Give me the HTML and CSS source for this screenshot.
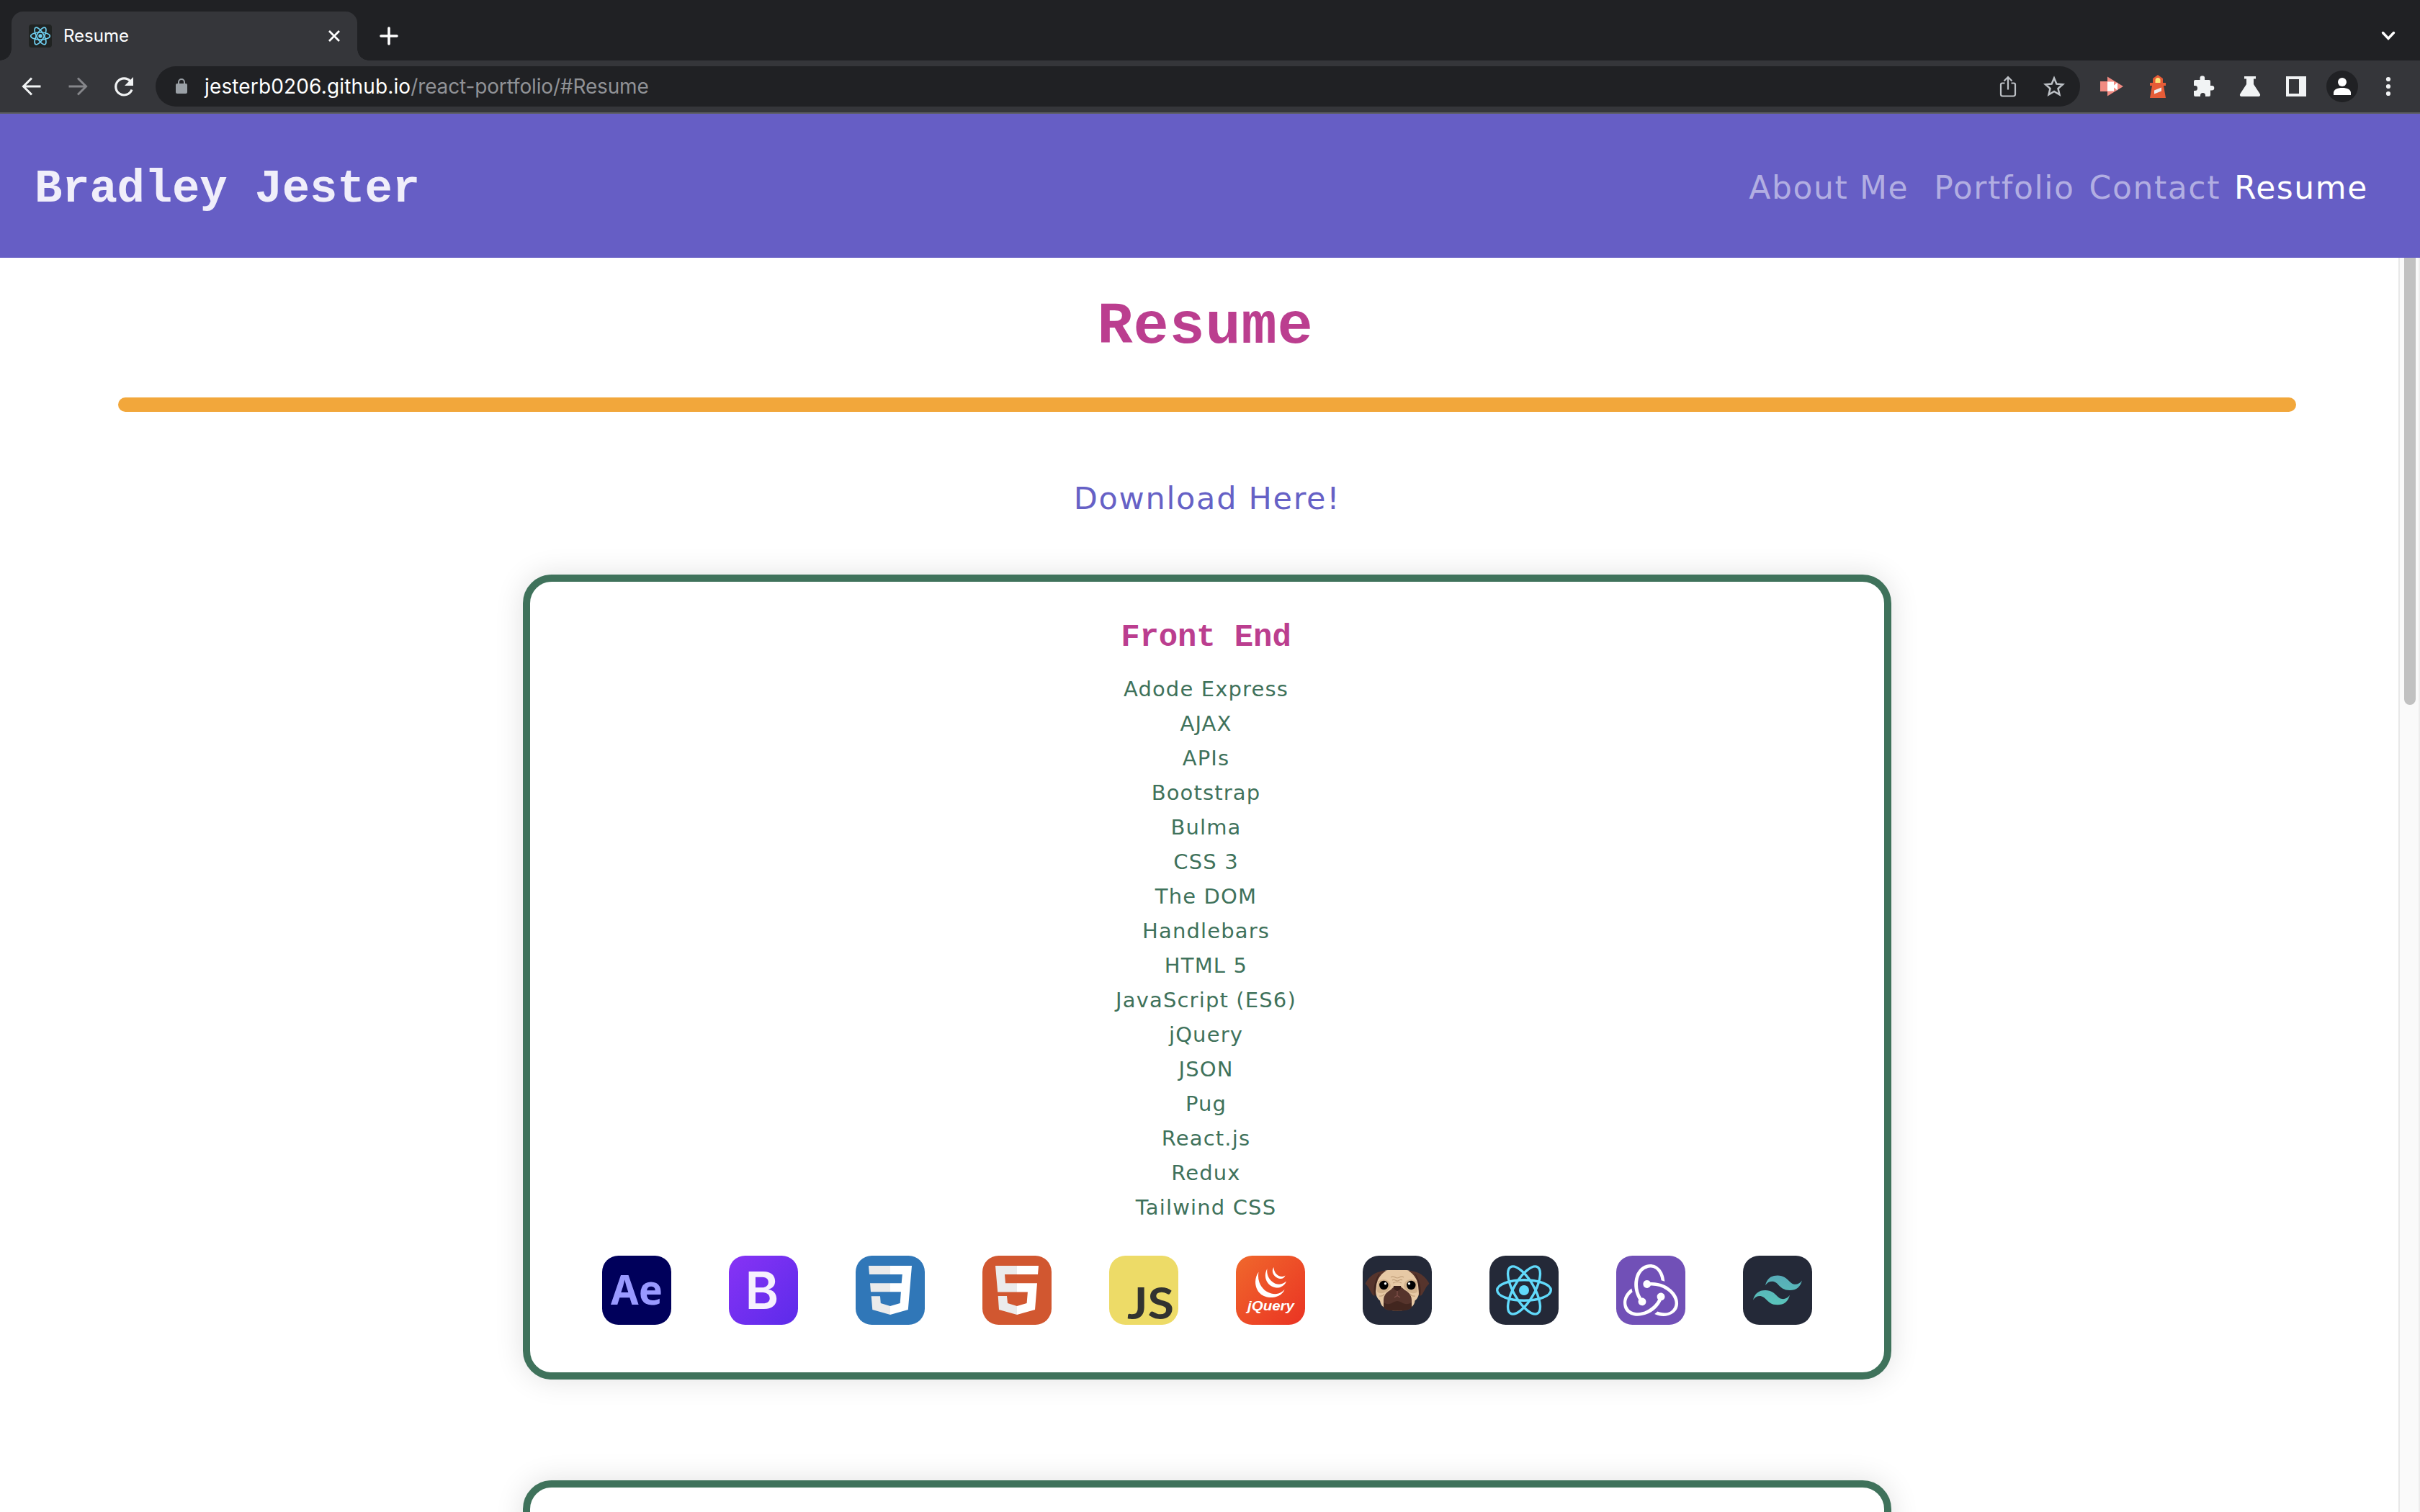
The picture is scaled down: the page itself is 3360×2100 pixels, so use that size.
FILE: index.html
```html
<!DOCTYPE html>
<html lang="en">
<head>
<meta charset="utf-8">
<title>Resume</title>
<link rel="stylesheet" href="styles.css">
</head>
<body>
<div class="tabstrip">
  <div class="tab">
    <svg class="favicon" viewBox="0 0 96 96"><rect width="96" height="96" rx="12" fill="#202322"/><g fill="none" stroke="#6fcff0" stroke-width="5"><ellipse cx="48" cy="48" rx="40" ry="15"/><ellipse cx="48" cy="48" rx="40" ry="15" transform="rotate(60 48 48)"/><ellipse cx="48" cy="48" rx="40" ry="15" transform="rotate(120 48 48)"/></g><circle cx="48" cy="48" r="8" fill="#6fcff0"/></svg>
    <span class="tab-title">Resume</span>
    <svg class="tab-close" viewBox="0 0 20 20"><path d="M3 3l14 14M17 3L3 17" stroke="#fff" stroke-width="2.8"/></svg>
  </div>
  <svg class="new-tab" viewBox="0 0 28 28"><path d="M14 3v22M3 14h22" stroke="#fff" stroke-width="3.6" stroke-linecap="round"/></svg>
  <svg class="tab-search" viewBox="0 0 24 24"><path d="M4.500 7.500l7.500 8 7.500-8" fill="none" stroke="#fff" stroke-width="3.400" stroke-linecap="round"/></svg>
</div>
<div class="toolbar">
  <span class="cell"><svg viewBox="0 0 32 32"><path d="M28.500 16H5M16 4.500L4.500 16 16 27.500" fill="none" stroke="#f1f3f4" stroke-width="3"/></svg></span>
  <span class="cell"><svg viewBox="0 0 32 32"><path d="M3.500 16H27M16 4.500L27.500 16 16 27.500" fill="none" stroke="#85868a" stroke-width="3"/></svg></span>
  <span class="cell"><svg viewBox="0 0 32 32"><path d="M27 20.500A11.500 11.500 0 1 1 25 9" fill="none" stroke="#f1f3f4" stroke-width="3.200"/><path d="M29 3v12H17z" fill="#f1f3f4"/></svg></span>
  <div class="omnibox">
    <svg class="lock" viewBox="0 0 18 24"><rect x="1" y="8" width="16" height="14" rx="2" fill="#9aa0a6"/><path d="M5 9V6a4 4 0 0 1 8 0v3" fill="none" stroke="#9aa0a6" stroke-width="2"/></svg>
    <span class="url"><span class="host">jesterb0206.github.io</span><span class="path">/react-portfolio/#Resume</span></span>
    <span class="cell"><svg viewBox="0 0 32 32"><path d="M11.500 11.500H8a2 2 0 0 0-2 2V27a2.500 2.500 0 0 0 2.500 2.500h15A2.500 2.500 0 0 0 26 27V13.500a2 2 0 0 0-2-2h-3.500M16 20.500V3M10.500 8.500L16 3l5.500 5.500" fill="none" stroke="#bdc1c6" stroke-width="2.200"/></svg></span>
    <span class="cell"><svg viewBox="0 0 32 32"><path d="M16 4.500l3.400 8 8.600.8-6.500 5.700 2 8.500L16 23l-7.500 4.500 2-8.500L4 13.300l8.600-.8z" fill="none" stroke="#bdc1c6" stroke-width="2.500"/></svg></span>
  </div>
  <span class="cell"><svg viewBox="0 0 32 32"><path d="M0 9h10V2.500L32 16 10 29.500V23H0z" fill="#f28b82"/><path d="M10 9.500h9v5l5-4v11l-5-4v5h-9z" fill="#fff"/></svg></span>
  <span class="cell"><svg viewBox="0 0 32 32"><path d="M16 0l7 5v6h4v4h-3l3 17H5l3-17H5v-4h4V5z" fill="#e65c37"/><path d="M12.500 11V7.500a3.500 3.500 0 0 1 7 0V11z" fill="#fde67a"/><path d="M11 21.500l10-4v5L11 26.500z" fill="#eee"/></svg></span>
  <span class="cell"><svg viewBox="0 0 32 32"><path d="M2 9a2 2 0 0 1 2-2h6.500V4.500a3.300 3.300 0 0 1 6.600 0V7H23a2 2 0 0 1 2 2v6h2a3.300 3.300 0 0 1 0 6.600H25V28a2 2 0 0 1-2 2h-5v-1.500a3.500 3.500 0 0 0-7 0V30H4a2 2 0 0 1-2-2v-6h1.500a3.500 3.500 0 0 0 0-7H2z" fill="#f1f3f4"/></svg></span>
  <span class="cell"><svg viewBox="0 0 32 32"><path d="M8 2h16v3.500h-3V13l8.500 13c1.300 2 .5 4-2 4h-23c-2.500 0-3.300-2-2-4L11 13V5.500H8z" fill="#f1f3f4"/></svg></span>
  <span class="cell"><svg viewBox="0 0 32 32"><path fill-rule="evenodd" d="M2 2h28v28H2zM6 6v20h14V6z" fill="#f1f3f4"/></svg></span>
  <span class="cell"><svg class="avatar" viewBox="0 0 44 44"><circle cx="22" cy="22" r="22" fill="#202124"/><circle cx="22" cy="16" r="6" fill="#fff"/><path d="M10 34v-3c0-4.500 5-7 12-7s12 2.500 12 7v3z" fill="#fff"/></svg></span>
  <span class="cell"><svg viewBox="0 0 32 32" fill="#f1f3f4"><circle cx="16" cy="6" r="3.100"/><circle cx="16" cy="16" r="3.100"/><circle cx="16" cy="26" r="3.100"/></svg></span>
</div>
<header class="site-header">
  <div class="brand">Bradley Jester</div>
  <nav class="nav">
    <a class="link link-about">About Me</a>
    <a class="link link-portfolio">Portfolio</a>
    <a class="link link-contact">Contact</a>
    <a class="link active">Resume</a>
  </nav>
</header>
<div class="viewport">
  <main class="content">
    <h1 class="page-title">Resume</h1>
    <hr class="rule">
    <a class="download">Download Here!</a>
    <section class="card">
      <h2 class="card-title">Front End</h2>
      <ul class="skills">
        <li>Adode Express</li>
        <li>AJAX</li>
        <li>APIs</li>
        <li>Bootstrap</li>
        <li>Bulma</li>
        <li>CSS 3</li>
        <li>The DOM</li>
        <li>Handlebars</li>
        <li>HTML 5</li>
        <li>JavaScript (ES6)</li>
        <li>jQuery</li>
        <li>JSON</li>
        <li>Pug</li>
        <li>React.js</li>
        <li>Redux</li>
        <li>Tailwind CSS</li>
      </ul>
      <div class="icons">
        <svg viewBox="0 0 96 96"><rect width="96" height="96" rx="22.500" fill="#00005b"/><text class="t-ae" x="12" y="68.300" textLength="72" lengthAdjust="spacingAndGlyphs">Ae</text></svg>
        <svg viewBox="0 0 96 96"><defs><linearGradient id="bs" x1="0" y1="0" x2="1" y2="1"><stop offset="0" stop-color="#8733f5"/><stop offset="1" stop-color="#5c2bea"/></linearGradient></defs><rect width="96" height="96" rx="22.500" fill="url(#bs)"/><text class="t-b" x="22.500" y="74">B</text></svg>
        <svg viewBox="0 0 96 96"><rect width="96" height="96" rx="22.500" fill="#3077b8"/><path d="M48 14H18l1 12h29zM48 38.300H20l1 12h27zM48 70l-13.200-4-.8-9.700H21.700L23.300 75 48 82z" fill="#ebebeb"/><path d="M48 14h30l-5.200 61L48 82V70l13.700-4 1.200-15.700H48v-12h15.700L64.800 26H48z" fill="#fff"/></svg>
        <svg viewBox="0 0 96 96"><rect width="96" height="96" rx="22.500" fill="#d15730"/><path d="M48 14H18l3.200 36.500H48V38.300H32L31 26h17zM48 70l-13-4-1-10H21.700L23 75l25 7z" fill="#ebebeb"/><path d="M48 14h30l-1 12H48zM48 38.300h28L73 75l-25 7V70l13.600-4 1.300-15.500H48z" fill="#fff"/></svg>
        <svg viewBox="0 0 96 96"><rect width="96" height="96" rx="22.500" fill="#eddb67"/><text class="t-js" x="25" y="88" textLength="65" lengthAdjust="spacingAndGlyphs">JS</text></svg>
        <svg viewBox="0 0 96 96"><defs><linearGradient id="jq" x1="0" y1="0" x2="1" y2="1"><stop offset="0" stop-color="#f0682c"/><stop offset="1" stop-color="#ea3323"/></linearGradient></defs><rect width="96" height="96" rx="22.500" fill="url(#jq)"/><path d="M31.500 22.500C22 36 28 57 47 58c10 .5 18-4 20.500-11C61 53.500 55 54 49 52.500 36 49 29 36 31.500 22.500zM43.500 18C37 29 43 43 56 44.500c6 .3 12-3 14-9C65 40 60 40.500 55 39 47 35.500 42 27 43.500 18zM52.500 16C48 22 53 31 61 32c4 .2 6.500-1.500 7.500-4.500-3.500 2-6 2-9 .5-4.500-2.500-7-7-7-12z" fill="#fff"/><text class="t-jq" x="16" y="75.500" textLength="65" lengthAdjust="spacingAndGlyphs">jQuery</text></svg>
        <svg viewBox="0 0 96 96"><rect width="96" height="96" rx="22.500" fill="#242938"/><path d="M35 20h26c12 1 17 12 17.500 24 .5 9-1 15-6 18.500C72 70 66 73 60 75q-12 3-24 0c-6-2-11-5-12-12.500-5-3.500-6.500-9.500-6-18.500C18.500 32 23 21 35 20z" fill="#e7c9a5"/><path d="M33 20.500C20 22 11 25 3.500 39 9 43 11 52 15 55.500l3-.5c0-16 2-26 15-34.500zM63 20.500C76 22 85 25 92.500 39 87 43 85 52 81 55.500l-3-.5c0-16-2-26-15-34.500z" fill="#56342c"/><path d="M22 26C18 33 14 43 16 55.500l2-.5c0-13 1-22 6-30zM74 26c4 7 8 17 6 29.500l-2-.5c0-13-1-22-6-30z" fill="#42261f"/><path d="M21 36c7-6 17-3 18 6-2 9-14 13-19 8zM75 36c-7-6-17-3-18 6 2 9 14 13 19 8z" fill="#d3b28c"/><path d="M48 42c5 0 7 3 11 6 7 4 9 9 9 14v10c-4 4-12 4.500-20 4.500S32 76 29 72V62c0-5 2-10 9-14 4-3 5-6 10-6z" fill="#56342c"/><path d="M29 65c9 6 13-2 19-2s10 8 20 2v7c-5 4-12 4.500-20 4.500S33 76 29 72z" fill="#42261f"/><path d="M43 42h10c1 4-2 6-5 7-3-1-6-3-5-7z" fill="#3b211c"/><path d="M48 49v7m-4 2l4-2.500 4 2.500" fill="none" stroke="#81504a" stroke-width="1.200"/><path d="M39 30c4-3 6 1 9 1s5-4 9-1M41 34c3-2 5 1 7 1s4-3 7-1M42 38q6-3 12 0M23 56q5 1 7-3M73 56q-5 1-7-3" fill="none" stroke="#c3a17c" stroke-width="1.200"/><circle cx="29.300" cy="41" r="6.200"/><circle cx="67.300" cy="41" r="6.200"/><circle cx="31.500" cy="38.800" r="1.700" fill="#fff"/><circle cx="64.500" cy="38.800" r="1.700" fill="#fff"/></svg>
        <svg viewBox="0 0 96 96"><rect width="96" height="96" rx="22.500" fill="#242938"/><g fill="none" stroke="#61dafb" stroke-width="3.400"><ellipse cx="48" cy="48" rx="37.300" ry="14.300"/><ellipse cx="48" cy="48" rx="37.300" ry="14.300" transform="rotate(60 48 48)"/><ellipse cx="48" cy="48" rx="37.300" ry="14.300" transform="rotate(120 48 48)"/></g><circle cx="48" cy="48" r="7" fill="#61dafb"/></svg>
        <svg viewBox="0 0 96 96"><rect width="96" height="96" rx="22.500" fill="#7150b7"/><path transform="translate(10 10) scale(3.170)" fill="#fff" d="M16.634 16.504c.87-.075 1.543-.84 1.500-1.754-.047-.914-.796-1.648-1.709-1.648h-.061c-.945.030-1.678.825-1.648 1.769.030.479.226.869.494 1.153-1.048 2.038-2.621 3.535-5.006 4.793-1.603.84-3.295 1.154-4.944.93-1.378-.196-2.456-.81-3.116-1.799-.988-1.499-1.078-3.116-.255-4.734.601-1.166 1.499-2.023 2.099-2.443-.15-.389-.33-1.048-.42-1.542-4.436 3.177-3.985 7.521-2.637 9.574 1.004 1.498 3.057 2.456 5.304 2.456.599 0 1.228-.044 1.843-.194 3.896-.749 6.848-3.086 8.541-6.532zM21.983 12.728c-2.321-2.727-5.738-4.225-9.634-4.225h-.51c-.253-.554-.837-.899-1.498-.899h-.045c-.943 0-1.678.81-1.647 1.753.030.898.794 1.648 1.708 1.648h.074c.675-.030 1.259-.45 1.498-1.049h.555c2.309 0 4.495.674 6.488 1.992 1.527 1.005 2.622 2.323 3.237 3.896.538 1.288.509 2.547-.045 3.597-.855 1.647-2.294 2.517-4.196 2.517-1.199 0-2.367-.375-2.967-.644-.36.298-.96.793-1.394 1.093 1.318.598 2.652.943 3.940.943 2.922 0 5.093-1.647 5.918-3.236.898-1.798.824-4.824-1.470-7.416zM6.490 17.042c.030.899.793 1.648 1.708 1.648h.06c.959-.030 1.693-.823 1.648-1.768 0-.9-.779-1.647-1.693-1.647h-.06c-.06 0-.149 0-.226.029-1.243-2.098-1.768-4.347-1.572-6.772.12-1.828.72-3.417 1.797-4.735.899-1.124 2.593-1.680 3.746-1.708 3.236-.061 4.585 3.971 4.689 5.574l1.498.45c-.345-4.914-3.400-7.492-6.322-7.492-2.742 0-5.273 1.993-6.293 4.915-1.393 3.896-.479 7.641 1.229 10.638-.149.195-.239.539-.209.868z"/></svg>
        <svg viewBox="0 0 96 96"><defs><linearGradient id="tw" x1="0" y1="0" x2="0" y2="1"><stop offset="0" stop-color="#57abb8"/><stop offset="1" stop-color="#5ac4ba"/></linearGradient></defs><rect width="96" height="96" rx="22.500" fill="#242938"/><path transform="translate(14 14) scale(2.830)" fill="url(#tw)" d="M12 4.800c-3.200 0-5.200 1.600-6 4.800 1.200-1.600 2.600-2.200 4.200-1.800.913.228 1.565.89 2.288 1.624C13.666 10.618 15.027 12 18 12c3.200 0 5.200-1.600 6-4.800-1.200 1.600-2.600 2.200-4.200 1.800-.913-.228-1.565-.89-2.288-1.624C16.337 6.182 14.976 4.800 12 4.800zM6 12c-3.200 0-5.200 1.600-6 4.800 1.200-1.600 2.600-2.200 4.200-1.800.913.228 1.565.89 2.288 1.624C7.666 17.818 9.027 19.200 12 19.200c3.200 0 5.200-1.600 6-4.800-1.200 1.600-2.600 2.200-4.200 1.800-.913-.228-1.565-.89-2.288-1.624C10.337 13.382 8.976 12 6 12z"/></svg>
      </div>
    </section>
    <section class="card"></section>
  </main>
  <div class="scrollbar"><div class="thumb"></div></div>
</div>
</body>
</html>
```
FILE: styles.css
```css
* { box-sizing: border-box; }
body { margin: 0; width: 3360px; height: 2100px; overflow: hidden; display: flex; flex-direction: column; background: #fff; font-family: "DejaVu Sans", sans-serif; }
svg { display: block; flex: none; overflow: visible; }

/* Browser window */
.tabstrip { flex: none; height: 84px; padding: 16px 30px 0 16px; display: flex; align-items: flex-start; background: #202124; color: #fff; font-family: Inter, sans-serif; }
.tab { position: relative; width: 480px; height: 68px; padding: 0 22px 0 24px; display: flex; align-items: center; border-radius: 16px 16px 0 0; background: #35363a; }
.tab::before, .tab::after { content: ""; position: absolute; bottom: 0; width: 16px; height: 16px; }
.tab::before { left: -16px; background: radial-gradient(circle at 0 0, transparent 15.5px, #35363a 16px); }
.tab::after { right: -16px; background: radial-gradient(circle at 100% 0, transparent 15.5px, #35363a 16px); }
.favicon { width: 32px; height: 32px; }
.tab-title { flex: 1; margin-left: 16px; font-size: 24px; line-height: 32px; }
.tab-close { width: 20px; height: 20px; }
.new-tab { width: 28px; height: 28px; margin: 20px 0 0 30px; }
.tab-search { width: 24px; height: 24px; margin: 22px 2px 0 auto; }

.toolbar { flex: none; height: 74px; padding: 8px 12px; display: flex; background: #35363a; border-bottom: 2px solid #5c5d60; font-family: Inter, sans-serif; }
.cell { flex: none; width: 64px; height: 56px; display: flex; align-items: center; justify-content: center; }
.cell svg { width: 32px; height: 32px; }
.cell .avatar { width: 44px; height: 44px; }
.omnibox { flex: 1; height: 56px; margin: 0 12px; padding: 0 4px 0 27px; display: flex; align-items: center; border-radius: 28px; background: #202124; }
.lock { width: 18px; height: 24px; }
.url { flex: 1; margin-left: 23px; font-size: 28px; line-height: 56px; white-space: nowrap; }
.host { color: #fff; letter-spacing: .15px; }
.path { color: #909296; letter-spacing: -.15px; }

/* Site header */
.site-header { flex: none; height: 200px; padding: 0 72px 0 48px; display: flex; align-items: center; justify-content: space-between; background: #665ec5; }
.brand { padding-top: 10px; font: bold 64px/80px "Liberation Mono", monospace; letter-spacing: -.2px; color: #f0eefa; }
.nav { padding-top: 6px; display: flex; font-size: 44px; line-height: 60px; letter-spacing: 1.6px; color: #b2aee2; }
.link-about { margin-right: 35px; }
.link-portfolio { margin-right: 20px; }
.link-contact { margin-right: 19px; }
.active { color: #fff; }

/* Resume page */
.viewport { flex: 1; min-height: 0; display: flex; }
.content { flex: 1; min-width: 0; padding-left: 22px; display: flex; flex-direction: column; align-items: center; overflow: hidden; }
.page-title { margin: 47px 0 0; padding-right: 5px; font: bold 82px/100px "Liberation Mono", monospace; letter-spacing: .8px; color: #bb3e8f; }
.rule { flex: none; width: 3024px; height: 20px; margin: 47px 0 0; border: 0; border-radius: 10px; background: #f2a73b; }
.download { margin-top: 90px; font-size: 43px; line-height: 60px; letter-spacing: 1.7px; color: #6661c6; }
.card { flex: none; width: 1900px; height: 1118px; margin-top: 76px; padding-top: 47px; display: flex; flex-direction: column; align-items: center; border: 10px solid #3f725b; border-radius: 40px; background: #fff; box-shadow: 0 0 40px rgba(0, 0, 0, .12); }
.card + .card { margin-top: 140px; }
.card-title { margin: 0; padding-right: 3px; font: bold 44px/60px "Liberation Mono", monospace; letter-spacing: -.15px; color: #bb3e8f; }
.skills { margin: 18px 0 0; padding: 0 3px 0 0; list-style: none; text-align: center; font-size: 29px; line-height: 48px; letter-spacing: 1.15px; color: #3f725b; }
.icons { margin-top: 43px; display: flex; gap: 80px; }
.icons svg { width: 96px; height: 96px; }
.t-ae { font: bold 58px "Noto Sans", sans-serif; fill: #9999ff; }
.t-b { font: 600 71px Inter, sans-serif; fill: #f6f0fe; }
.t-js { font: bold 61px Lato, sans-serif; fill: #323330; }
.t-jq { font: italic bold 19px "Liberation Sans", sans-serif; fill: #fff; }

/* Scrollbar */
.scrollbar { flex: none; width: 30px; padding-left: 6px; border-left: 2px solid #e8e8e8; border-right: 2px solid #ededed; background: #fafafa; }
.thumb { width: 16px; height: 621px; border-radius: 0 0 8px 8px; background: #c1c1c1; }
```
